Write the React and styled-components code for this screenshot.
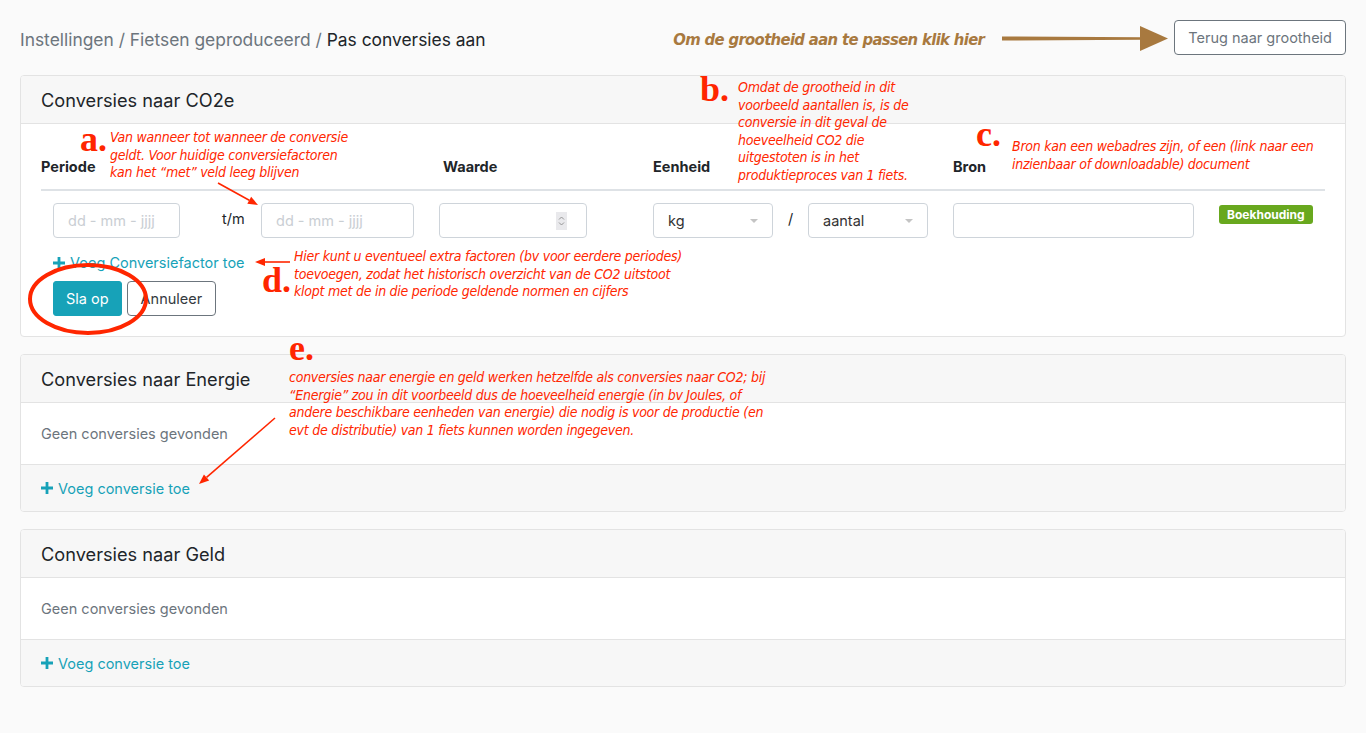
import React from 'react';
import styled, { createGlobalStyle } from 'styled-components';

const GlobalStyle = createGlobalStyle`
  body {
    margin: 0;
    background: #fafafa;
    font-family: Inter, "Noto Sans", Roboto, sans-serif;
    color: #212529;
  }
`;

const TEAL = '#17a2b8';
const RED = '#ff2600';
const BROWN = '#a8793f';
const NOTE_FONT = '"Liberation Sans Narrow", "DejaVu Sans Condensed", "Liberation Sans", sans-serif';

const Page = styled.div`
  position: relative;
  padding: 20px;
  min-height: 733px;
  box-sizing: border-box;
`;

const TopBar = styled.div`
  display: flex;
  align-items: center;
  height: 35px;
  margin-bottom: 20px;
`;

const Breadcrumb = styled.div`
  flex: 1;
  font-size: 17.4px;
  color: #6c757d;
  padding-top: 4px;

  strong {
    font-weight: 400;
    color: #212529;
  }
`;

const Hint = styled.div`
  font-family: ${NOTE_FONT};
  font-style: italic;
  font-weight: 700;
  font-size: 16.5px;
  letter-spacing: -0.65px;
  white-space: nowrap;
  color: ${BROWN};
  margin-right: 18px;
  padding-top: 3px;
`;

const OutlineButton = styled.button`
  height: 35px;
  padding: 0 13px;
  margin-left: ${(p) => (p.$dark ? 0 : 6)}px;
  border: 1px solid #6c757d;
  border-radius: 4px;
  background: #fff;
  color: ${(p) => (p.$dark ? '#343a40' : '#6c757d')};
  font-family: inherit;
  font-size: 14.5px;
  cursor: pointer;
`;

const Card = styled.section`
  background: #fff;
  border: 1px solid #e3e3e3;
  border-radius: 4px;
  margin-bottom: 17px;
  overflow: hidden;
`;

const CardHeader = styled.h2`
  margin: 0;
  height: 47px;
  display: flex;
  align-items: center;
  padding: 0 20px;
  background: #f7f7f7;
  border-bottom: 1px solid #e3e3e3;
  font-size: 18.2px;
  font-weight: 400;
  color: #212529;
`;

const CardBody = styled.div`
  padding: 20px;
`;

const CardFooter = styled.div`
  height: 46px;
  display: flex;
  align-items: center;
  padding: 0 20px;
  background: #f7f7f7;
  border-top: 1px solid #e3e3e3;
`;

const Muted = styled.div`
  font-size: 14.5px;
  line-height: 21px;
  color: #6c757d;
`;

const HeadRow = styled.div`
  display: grid;
  grid-template-columns: 402px 210px 300px 1fr;
  padding: 12px 0;
  border-bottom: 2px solid #dee2e6;
`;

const HeadCell = styled.div`
  font-size: 14.5px;
  font-weight: 700;
  line-height: 21px;
  color: #212529;
`;

const DataRow = styled.div`
  display: flex;
  align-items: flex-start;
  padding: 12px 12px 0;
`;

const TextInput = styled.input`
  box-sizing: border-box;
  width: ${(p) => p.$w}px;
  height: 35px;
  margin-left: ${(p) => p.$ml || 0}px;
  padding: 0 14px;
  border: 1px solid #ced4da;
  border-radius: 4px;
  background: #fff;
  font-family: inherit;
  font-size: 14.5px;
  color: #333;
  outline: none;

  &::placeholder {
    color: #c9ced3;
  }
`;

const Box = styled.div`
  box-sizing: border-box;
  width: ${(p) => p.$w}px;
  height: 35px;
  margin-left: ${(p) => p.$ml || 0}px;
  padding: 0 ${(p) => p.$pr || 14}px 0 14px;
  border: 1px solid #ced4da;
  border-radius: 4px;
  background: #fff;
  display: flex;
  align-items: center;
  justify-content: space-between;
  font-size: 14.5px;
  color: #333;
`;

const Spinner = styled.span`
  margin-left: auto;
  width: 11px;
  height: 18px;
  background: #e9e9ec;
  display: flex;
  align-items: center;
  justify-content: center;
`;

const Caret = styled.span`
  width: 0;
  height: 0;
  border-left: 4px solid transparent;
  border-right: 4px solid transparent;
  border-top: 4px solid #c4c4c4;
`;

const Sep = styled.span`
  width: ${(p) => p.$w}px;
  box-sizing: border-box;
  padding-left: ${(p) => p.$pl || 0}px;
  padding-top: 5px;
  text-align: ${(p) => (p.$center ? 'center' : 'left')};
  font-size: 14.5px;
  line-height: 21px;
  color: #212529;
`;

const Badge = styled.span`
  margin-left: 25px;
  margin-top: 2px;
  padding: 0 8px;
  height: 19px;
  line-height: 19px;
  border-radius: 3px;
  background: #68a81e;
  color: #fff;
  font-size: 12px;
  font-weight: 700;
`;

const AddLink = styled.a`
  display: inline-flex;
  align-items: center;
  gap: 5px;
  margin-top: ${(p) => p.$mt || 0}px;
  margin-left: ${(p) => p.$ml || 0}px;
  font-size: 14.5px;
  line-height: 21px;
  color: ${TEAL};
  text-decoration: none;
  cursor: pointer;
`;

const Actions = styled.div`
  display: flex;
  gap: 5px;
  margin: 8px 0 0 12px;
`;

const PrimaryButton = styled.button`
  height: 35px;
  padding: 0 12px;
  border: 1px solid ${TEAL};
  border-radius: 3px;
  background: ${TEAL};
  color: #fff;
  font-family: inherit;
  font-size: 14.5px;
  cursor: pointer;
`;

const Overlay = styled.div`
  position: absolute;
  inset: 0;
  pointer-events: none;
`;

const Note = styled.div`
  position: absolute;
  left: ${(p) => p.$x}px;
  top: ${(p) => p.$y}px;
  white-space: nowrap;
  font-family: ${NOTE_FONT};
  font-style: italic;
  font-size: 14px;
  letter-spacing: -0.25px;
  line-height: 17.5px;
  color: ${RED};
`;

const Letter = styled.div`
  position: absolute;
  left: ${(p) => p.$x}px;
  top: ${(p) => p.$y}px;
  font-family: "Liberation Serif", serif;
  font-weight: 700;
  font-size: 36px;
  line-height: 36px;
  color: ${RED};
`;

const Drawing = styled.svg`
  position: absolute;
  left: 0;
  top: 0;
`;

const Arrow = ({ x1, y1, x2, y2 }) => {
  const a = Math.atan2(y2 - y1, x2 - x1);
  const l = 10;
  const w = 4;
  const bx = x2 - l * Math.cos(a);
  const by = y2 - l * Math.sin(a);
  const px = -Math.sin(a) * w;
  const py = Math.cos(a) * w;
  return (
    <g>
      <line x1={x1} y1={y1} x2={bx} y2={by} stroke={RED} strokeWidth="1.6" />
      <polygon points={`${x2},${y2} ${bx + px},${by + py} ${bx - px},${by - py}`} fill={RED} />
    </g>
  );
};

const PlusIcon = () => (
  <svg width="12" height="12" viewBox="0 0 12 12">
    <path d="M6 0 V12 M0 6 H12" stroke={TEAL} strokeWidth="2.8" />
  </svg>
);

const SpinIcon = () => (
  <svg width="7" height="12" viewBox="0 0 7 12">
    <path d="M1 4.5 L3.5 2 L6 4.5 M1 7.5 L3.5 10 L6 7.5" fill="none" stroke="#8a8a8a" strokeWidth="0.9" />
  </svg>
);

const EmptyCard = ({ title }) => (
  <Card>
    <CardHeader>{title}</CardHeader>
    <CardBody>
      <Muted>Geen conversies gevonden</Muted>
    </CardBody>
    <CardFooter>
      <AddLink>
        <PlusIcon />
        Voeg conversie toe
      </AddLink>
    </CardFooter>
  </Card>
);

export default function App() {
  return (
    <Page>
      <GlobalStyle />
      <TopBar>
        <Breadcrumb>
          Instellingen / Fietsen geproduceerd / <strong>Pas conversies aan</strong>
        </Breadcrumb>
        <Hint>Om de grootheid aan te passen klik hier</Hint>
        <svg width="166" height="28" viewBox="0 0 166 28">
          <path d="M0 12.5 L140 13.2 L140 15.8 L0 16.5 Z" fill={BROWN} />
          <polygon points="138,2 166,14.5 138,27" fill={BROWN} />
        </svg>
        <OutlineButton>Terug naar grootheid</OutlineButton>
      </TopBar>

      <Card>
        <CardHeader>Conversies naar CO2e</CardHeader>
        <CardBody>
          <HeadRow>
            <HeadCell>Periode</HeadCell>
            <HeadCell>Waarde</HeadCell>
            <HeadCell>Eenheid</HeadCell>
            <HeadCell>Bron</HeadCell>
          </HeadRow>
          <DataRow>
            <TextInput $w={127} placeholder="dd - mm - jjjj" />
            <Sep $w={81} $pl={42}>t/m</Sep>
            <TextInput $w={153} placeholder="dd - mm - jjjj" />
            <Box $w={148} $ml={25} $pr={19}>
              <Spinner>
                <SpinIcon />
              </Spinner>
            </Box>
            <Box $w={120} $ml={66}>
              kg
              <Caret />
            </Box>
            <Sep $w={35} $center>/</Sep>
            <Box $w={120}>
              aantal
              <Caret />
            </Box>
            <TextInput $w={241} $ml={25} />
            <Badge>Boekhouding</Badge>
          </DataRow>
          <AddLink $mt={14} $ml={12}>
            <PlusIcon />
            Voeg Conversiefactor toe
          </AddLink>
          <Actions>
            <PrimaryButton>Sla op</PrimaryButton>
            <OutlineButton $dark>Annuleer</OutlineButton>
          </Actions>
        </CardBody>
      </Card>

      <EmptyCard title="Conversies naar Energie" />
      <EmptyCard title="Conversies naar Geld" />

      <Overlay>
        <Drawing width="1366" height="733" viewBox="0 0 1366 733">
          <ellipse cx="88" cy="299" rx="58" ry="34" fill="none" stroke={RED} strokeWidth="4" />
          <Arrow x1={218} y1={183} x2={258} y2={205} />
          <Arrow x1={290} y1={262} x2={255} y2={262} />
          <Arrow x1={275} y1={418} x2={199} y2={484} />
        </Drawing>

        <Letter $x={80} $y={121}>a.</Letter>
        <Note $x={110} $y={129}>
          Van wanneer tot wanneer de conversie
          <br />
          geldt. Voor huidige conversiefactoren
          <br />
          kan het “met” veld leeg blijven
        </Note>

        <Letter $x={700} $y={71}>b.</Letter>
        <Note $x={738} $y={79}>
          Omdat de grootheid in dit
          <br />
          voorbeeld aantallen is, is de
          <br />
          conversie in dit geval de
          <br />
          hoeveelheid CO2 die
          <br />
          uitgestoten is in het
          <br />
          produktieproces van 1 fiets.
        </Note>

        <Letter $x={976} $y={116}>c.</Letter>
        <Note $x={1012} $y={138}>
          Bron kan een webadres zijn, of een (link naar een
          <br />
          inzienbaar of downloadable) document
        </Note>

        <Letter $x={262} $y={262}>d.</Letter>
        <Note $x={294} $y={248}>
          Hier kunt u eventueel extra factoren (bv voor eerdere periodes)
          <br />
          toevoegen, zodat het historisch overzicht van de CO2 uitstoot
          <br />
          klopt met de in die periode geldende normen en cijfers
        </Note>

        <Letter $x={289} $y={330}>e.</Letter>
        <Note $x={289} $y={369}>
          conversies naar energie en geld werken hetzelfde als conversies naar CO2; bij
          <br />
          “Energie” zou in dit voorbeeld dus de hoeveelheid energie (in bv Joules, of
          <br />
          andere beschikbare eenheden van energie) die nodig is voor de productie (en
          <br />
          evt de distributie) van 1 fiets kunnen worden ingegeven.
        </Note>
      </Overlay>
    </Page>
  );
}
